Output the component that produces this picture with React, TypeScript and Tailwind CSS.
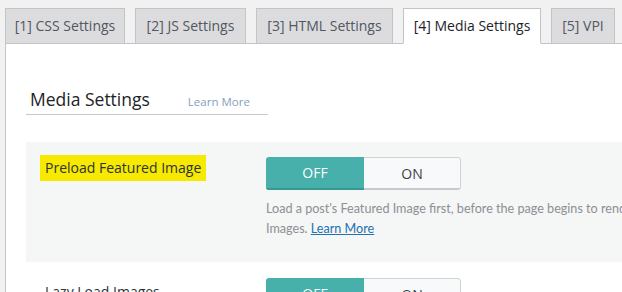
import React from "react";

const font = { fontFamily: '"Open Sans", "Noto Sans", sans-serif' };
const lato = { fontFamily: 'Lato, "Open Sans", sans-serif' };

function Tab({ label, w, active }: { label: string; w: string; active?: boolean }) {
  return (
    <div
      className={
        "flex h-[36px] shrink-0 items-center justify-center border border-[#c3c4c7] pb-[2px] text-[14px] " +
        w +
        (active
          ? " relative z-10 border-b-white bg-white text-[#1d2327]"
          : " bg-[#dcdcde] text-[#50575e]")
      }
    >
      {label}
    </div>
  );
}

function Toggle() {
  return (
    <div className="flex h-[33px] w-[195px] overflow-hidden rounded-[3px] text-[14px]">
      <div className="flex w-[98px] items-center justify-center border-b-2 border-[#389893] bg-[#47b0ab] text-white">
        OFF
      </div>
      <div className="flex flex-1 items-center justify-center rounded-r-[3px] border border-l-0 border-[#d0d2d4] border-b-2 border-b-[#c8cacc] bg-[#f8f9fa] text-[#3c434a]">
        ON
      </div>
    </div>
  );
}

export default function App() {
  return (
    <div className="h-[292px] w-[622px] overflow-hidden bg-[#f1f1f1] pl-[5px] pt-[8px]" style={font}>
      <div className="flex gap-[10px]">
        <Tab label="[1] CSS Settings" w="w-[120px]" />
        <Tab label="[2] JS Settings" w="w-[111px]" />
        <Tab label="[3] HTML Settings" w="w-[137px]" />
        <Tab label="[4] Media Settings" w="w-[138px]" active />
        <Tab label="[5] VPI" w="w-[64px]" />
      </div>
      <div className="-mt-px h-[300px] border-l border-t border-[#c3c4c7] bg-white pl-[20px] pt-[45px]">
        <div className="flex h-[26px] w-[242px] items-baseline border-b border-[#c8c8c8] pl-[4px]">
          <span className="text-[17.5px] leading-[20px] text-[#1d2327]">Media Settings</span>
          <span className="ml-[38px] text-[11.5px] leading-[20px] text-[#86a0bd]">Learn More</span>
        </div>
        <div className="mt-[27px] flex bg-[#f5f6f6] pb-[23px] pl-[14px] pt-[13px]">
          <div className="w-[226px] shrink-0">
            <span className="inline-block h-[26px] bg-[#f7e900] px-[5px] text-[14px] leading-[26px] text-[#2c3338]">
              Preload Featured Image
            </span>
          </div>
          <div className="pt-[2px]">
            <Toggle />
            <div className="mt-[9px] w-[400px] text-[12.6px] leading-[20px] text-[#8c8f94]" style={lato}>
              <div className="whitespace-nowrap">
                Load a post's Featured Image first, before the page begins to render the rest of the
              </div>
              <div>
                Images. <span className="text-[#2271b1] underline">Learn More</span>
              </div>
            </div>
          </div>
        </div>
        <div className="flex pl-[14px] pt-[14px]">
          <div className="w-[226px] shrink-0 pt-[3px]">
            <span className="inline-block h-[26px] px-[5px] text-[14px] leading-[26px] text-[#2c3338]">
              Lazy Load Images
            </span>
          </div>
          <div className="pt-[2px]">
            <Toggle />
          </div>
        </div>
      </div>
    </div>
  );
}
